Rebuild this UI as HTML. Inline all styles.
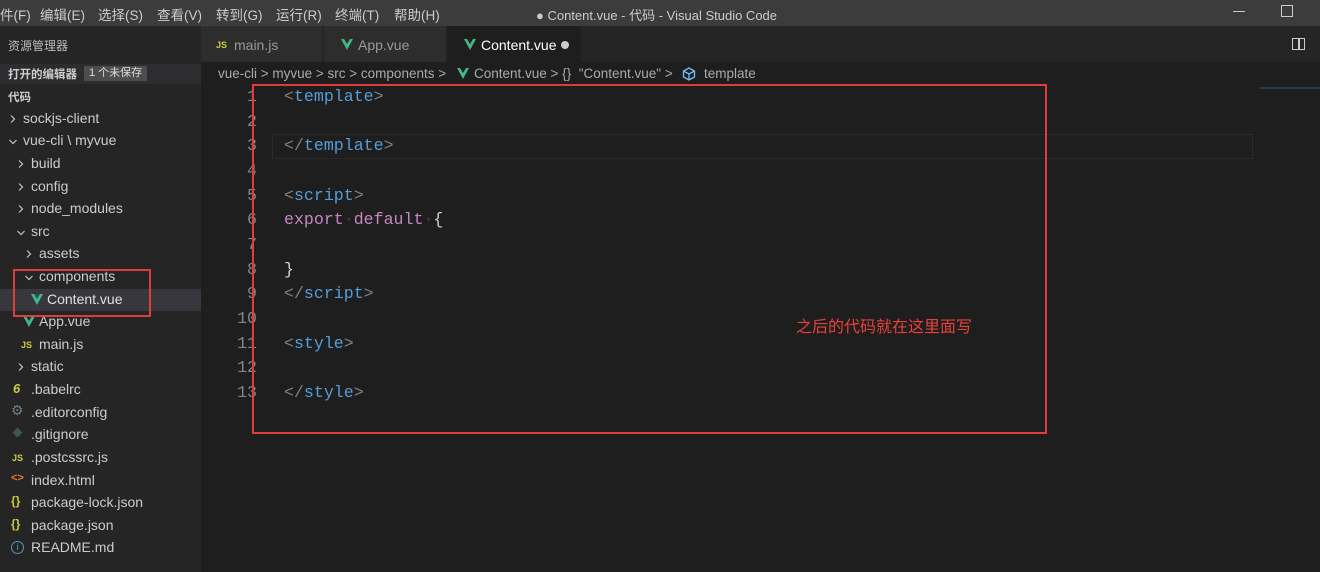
<!DOCTYPE html>
<html><head><meta charset="utf-8"><style>
*{margin:0;padding:0;box-sizing:border-box}
body{width:1320px;height:572px;background:#1e1e1e;font-family:"Liberation Sans","Noto Sans CJK SC",sans-serif;color:#ccc;position:relative;overflow:hidden}
.a{position:absolute;white-space:nowrap}
#title{left:0;top:0;width:1320px;height:26px;background:#3c3c3c}
#side{left:0;top:26px;width:201px;height:546px;background:#252526}
#tabs{left:201px;top:26px;width:1119px;height:36px;background:#252526}
.m{font-size:13.5px;color:#ccc;top:4px}
.r{font-size:14px;color:#ccc}
.cv{width:10px;height:10px}
.code{font-family:"Liberation Mono",monospace;font-size:16.6px;color:#808080}
.t{color:#569cd6}.k{color:#c586c0}.w{color:#d4d4d4}
.ln{font-family:"Liberation Mono",monospace;font-size:16.6px;color:#858585;width:40px;text-align:right;left:217px}
</style></head><body>
<svg width="0" height="0" style="position:absolute"><defs>
<symbol id="r" viewBox="0 0 10 10"><path d="M3 1.5L6.5 5 3 8.5" fill="none" stroke="#c5c5c5" stroke-width="1.2"/></symbol>
<symbol id="d" viewBox="0 0 10 10"><path d="M1.5 3L5 6.5 8.5 3" fill="none" stroke="#c5c5c5" stroke-width="1.2"/></symbol>
</defs></svg>
<div class="a" id="title"></div>
<div class="a m" style="left:0">件(F)</div>
<div class="a m" style="left:40px">编辑(E)</div>
<div class="a m" style="left:98px">选择(S)</div>
<div class="a m" style="left:157px">查看(V)</div>
<div class="a m" style="left:216px">转到(G)</div>
<div class="a m" style="left:276px">运行(R)</div>
<div class="a m" style="left:335px">终端(T)</div>
<div class="a m" style="left:394px">帮助(H)</div>
<div class="a m" style="left:536px;font-size:13px;top:5px">● Content.vue - 代码 - Visual Studio Code</div>
<div class="a" style="left:1233px;top:11px;width:12px;height:1px;background:#ccc"></div>
<div class="a" style="left:1281px;top:5px;width:12px;height:12px;border:1px solid #ccc"></div>

<div class="a" id="side"></div>
<div class="a" style="left:8px;top:37px;font-size:12px;color:#bbb">资源管理器</div>
<div class="a" style="left:0;top:64px;width:201px;height:20px;background:#2d2d30"></div>
<div class="a" style="left:8px;top:66px;font-size:11.5px;font-weight:bold;color:#ccc">打开的编辑器</div>
<div class="a" style="left:84px;top:66px;height:15px;padding:0 5px;background:#4d4d4d;font-size:11px;color:#ddd;line-height:15px">1 个未保存</div>
<div class="a" style="left:8px;top:89px;font-size:11.5px;font-weight:bold;color:#ccc">代码</div>
<div class="a" style="left:0;top:289px;width:201px;height:22px;background:#37373d"></div>

<svg class="a cv" style="left:8px;top:114px"><use href="#r"/></svg><div class="a r" style="left:23px;top:110px">sockjs-client</div>
<svg class="a cv" style="left:8px;top:137px"><use href="#d"/></svg><div class="a r" style="left:23px;top:132px">vue-cli \ myvue</div>
<svg class="a cv" style="left:16px;top:159px"><use href="#r"/></svg><div class="a r" style="left:31px;top:155px">build</div>
<svg class="a cv" style="left:16px;top:182px"><use href="#r"/></svg><div class="a r" style="left:31px;top:178px">config</div>
<svg class="a cv" style="left:16px;top:204px"><use href="#r"/></svg><div class="a r" style="left:31px;top:200px">node_modules</div>
<svg class="a cv" style="left:16px;top:228px"><use href="#d"/></svg><div class="a r" style="left:31px;top:223px">src</div>
<svg class="a cv" style="left:24px;top:249px"><use href="#r"/></svg><div class="a r" style="left:39px;top:245px">assets</div>
<svg class="a cv" style="left:24px;top:273px"><use href="#d"/></svg><div class="a r" style="left:39px;top:268px">components</div>
<svg class="a" style="left:31px;top:294px" width="12" height="11" viewBox="0 0 12 11"><path d="M0 0h12L6 11z" fill="#41b883"/><path d="M3 0h6L6 5z" fill="#34495e"/></svg>
<div class="a r" style="left:47px;top:291px;color:#e0e0e0">Content.vue</div>
<svg class="a" style="left:23px;top:316px" width="12" height="11" viewBox="0 0 12 11"><path d="M0 0h12L6 11z" fill="#41b883"/><path d="M3 0h6L6 5z" fill="#252526"/></svg>
<div class="a r" style="left:39px;top:313px">App.vue</div>
<div class="a" style="left:21px;top:340px;font-size:9px;font-weight:bold;color:#cbcb41">JS</div><div class="a r" style="left:39px;top:336px">main.js</div>
<svg class="a cv" style="left:16px;top:362px"><use href="#r"/></svg><div class="a r" style="left:31px;top:358px">static</div>
<div class="a" style="left:13px;top:381px;font-size:13px;font-style:italic;font-weight:bold;color:#cbcb41">6</div><div class="a r" style="left:31px;top:381px">.babelrc</div>
<div class="a" style="left:11px;top:402px;font-size:14px;color:#6d8086">⚙</div><div class="a r" style="left:31px;top:404px">.editorconfig</div>
<div class="a" style="left:14px;top:429px;width:7px;height:7px;background:#41535b;transform:rotate(45deg)"></div><div class="a r" style="left:31px;top:426px">.gitignore</div>
<div class="a" style="left:12px;top:453px;font-size:9px;font-weight:bold;color:#cbcb41">JS</div><div class="a r" style="left:31px;top:449px">.postcssrc.js</div>
<div class="a" style="left:11px;top:472px;font-size:11px;font-weight:bold;color:#e37933">&lt;&gt;</div><div class="a r" style="left:31px;top:472px">index.html</div>
<div class="a" style="left:11px;top:494px;font-size:12px;font-weight:bold;color:#cbcb41">{}</div><div class="a r" style="left:31px;top:494px">package-lock.json</div>
<div class="a" style="left:11px;top:517px;font-size:12px;font-weight:bold;color:#cbcb41">{}</div><div class="a r" style="left:31px;top:517px">package.json</div>
<div class="a" style="left:11px;top:541px;width:13px;height:13px;border:1px solid #519aba;border-radius:50%;font-size:9px;color:#519aba;text-align:center;line-height:11px">i</div><div class="a r" style="left:31px;top:539px">README.md</div>
<div class="a" style="left:13px;top:269px;width:138px;height:48px;border:2px solid #e03c3c"></div>

<div class="a" id="tabs"></div>
<div class="a" style="left:201px;top:26px;width:122px;height:36px;background:#2d2d2d;border-right:1px solid #252526"></div>
<div class="a" style="left:324px;top:26px;width:122px;height:36px;background:#2d2d2d"></div>
<div class="a" style="left:447px;top:26px;width:134px;height:36px;background:#1e1e1e"></div>
<div class="a" style="left:216px;top:40px;font-size:9px;font-weight:bold;color:#cbcb41">JS</div>
<div class="a" style="left:234px;top:37px;font-size:14px;color:#999">main.js</div>
<svg class="a" style="left:341px;top:39px" width="12" height="11" viewBox="0 0 12 11"><path d="M0 0h12L6 11z" fill="#41b883"/><path d="M3 0h6L6 5z" fill="#2d2d2d"/></svg>
<div class="a" style="left:358px;top:37px;font-size:14px;color:#999">App.vue</div>
<svg class="a" style="left:464px;top:39px" width="12" height="11" viewBox="0 0 12 11"><path d="M0 0h12L6 11z" fill="#41b883"/><path d="M3 0h6L6 5z" fill="#1e1e1e"/></svg>
<div class="a" style="left:481px;top:37px;font-size:14px;color:#fff">Content.vue</div>
<div class="a" style="left:561px;top:41px;width:8px;height:8px;border-radius:50%;background:#ccc"></div>
<div class="a" style="left:1292px;top:38px;width:13px;height:12px;border:1.5px solid #ccc"></div>
<div class="a" style="left:1298px;top:38px;width:1.5px;height:12px;background:#ccc"></div>

<div class="a" style="left:218px;top:66px;font-size:13.5px;color:#aaa">vue-cli &gt; myvue &gt; src &gt; components &gt;</div>
<svg class="a" style="left:457px;top:68px" width="12" height="11" viewBox="0 0 12 11"><path d="M0 0h12L6 11z" fill="#41b883"/><path d="M3 0h6L6 5z" fill="#1e1e1e"/></svg>
<div class="a" style="left:474px;top:66px;font-size:13.5px;color:#aaa">Content.vue &gt; {} &nbsp;"Content.vue" &gt;</div>
<svg class="a" style="left:682px;top:67px" width="14" height="14" viewBox="0 0 14 14"><path d="M7 1l5.5 3v6L7 13 1.5 10V4zM1.5 4L7 7l5.5-3M7 7v6" fill="none" stroke="#75beff" stroke-width="1.3"/></svg>
<div class="a" style="left:704px;top:66px;font-size:13.5px;color:#aaa">template</div>

<div class="a" style="left:272px;top:134px;width:981px;height:25px;border:1px solid #2b2b2b"></div>
<div class="a" style="left:1260px;top:87px;width:60px;height:2px;background:#2a3a4a"></div>

<div class="a ln" style="top:87px">1</div><div class="a ln" style="top:112px">2</div><div class="a ln" style="top:136px">3</div><div class="a ln" style="top:161px">4</div><div class="a ln" style="top:186px">5</div><div class="a ln" style="top:210px">6</div><div class="a ln" style="top:235px">7</div><div class="a ln" style="top:260px">8</div><div class="a ln" style="top:284px">9</div><div class="a ln" style="top:309px">10</div><div class="a ln" style="top:334px">11</div><div class="a ln" style="top:358px">12</div><div class="a ln" style="top:383px">13</div>

<div class="a code" style="left:284px;top:87px">&lt;<span class="t">template</span>&gt;</div>
<div class="a code" style="left:284px;top:136px">&lt;/<span class="t">template</span>&gt;</div>
<div class="a code" style="left:284px;top:186px">&lt;<span class="t">script</span>&gt;</div>
<div class="a code" style="left:284px;top:210px"><span class="k">export</span><span style="color:#444">·</span><span class="k">default</span><span style="color:#444">·</span><span class="w">{</span></div>
<div class="a code" style="left:284px;top:260px"><span class="w">}</span></div>
<div class="a code" style="left:284px;top:284px">&lt;/<span class="t">script</span>&gt;</div>
<div class="a code" style="left:284px;top:334px">&lt;<span class="t">style</span>&gt;</div>
<div class="a code" style="left:284px;top:383px">&lt;/<span class="t">style</span>&gt;</div>

<div class="a" style="left:252px;top:84px;width:795px;height:350px;border:2px solid #e03c3c"></div>
<div class="a" style="left:796px;top:313px;font-size:16px;color:#e8413c">之后的代码就在这里面写</div>
</body></html>
